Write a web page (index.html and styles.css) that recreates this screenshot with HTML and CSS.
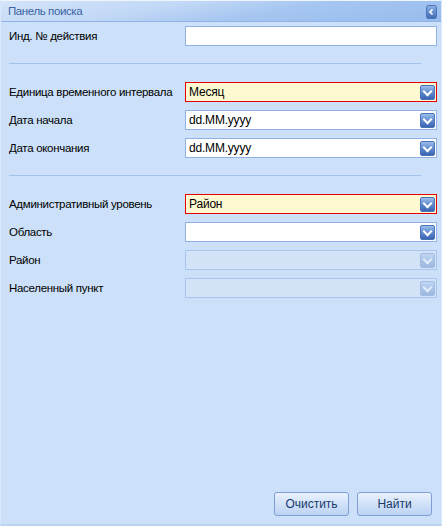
FILE: index.html
```html
<!DOCTYPE html>
<html lang="ru">
<head>
<meta charset="utf-8">
<title>Панель поиска</title>
<link rel="stylesheet" href="styles.css">
</head>
<body>
<div class="panel">
  <div class="header">
    <span class="title">Панель поиска</span>
    <span class="collapse">
      <svg width="11" height="14" viewBox="0 0 11 14">
        <defs>
          <linearGradient id="cg" x1="0" y1="0" x2="0" y2="1">
            <stop offset="0" stop-color="#8fb3e6"/>
            <stop offset="1" stop-color="#3d68b3"/>
          </linearGradient>
        </defs>
        <rect x="0.5" y="0.5" width="10" height="13" rx="2" fill="url(#cg)" stroke="#4a72b8"/>
        <path d="M6.5 4.5 L4 7 L6.5 9.5" fill="none" stroke="#fff" stroke-width="1.6"/>
      </svg>
    </span>
  </div>
  <div class="body">
    <div class="group">
      <div class="row"><label class="lbl">Инд. № действия</label><div class="field"></div></div>
    </div>
    <div class="sep"></div>
    <div class="group">
      <div class="row"><label class="lbl">Единица временного интервала</label><div class="field combo invalid"><span class="val">Месяц</span><span class="trigger"></span></div></div>
      <div class="row"><label class="lbl">Дата начала</label><div class="field combo"><span class="val">dd.MM.yyyy</span><span class="trigger"></span></div></div>
      <div class="row"><label class="lbl">Дата окончания</label><div class="field combo"><span class="val">dd.MM.yyyy</span><span class="trigger"></span></div></div>
    </div>
    <div class="sep"></div>
    <div class="group">
      <div class="row"><label class="lbl">Административный уровень</label><div class="field combo invalid"><span class="val">Район</span><span class="trigger"></span></div></div>
      <div class="row"><label class="lbl">Область</label><div class="field combo"><span class="val"></span><span class="trigger"></span></div></div>
      <div class="row"><label class="lbl">Район</label><div class="field combo disabled"><span class="val"></span><span class="trigger"></span></div></div>
      <div class="row"><label class="lbl">Населенный пункт</label><div class="field combo disabled"><span class="val"></span><span class="trigger"></span></div></div>
    </div>
  </div>
  <div class="footer">
    <button class="btn">Очистить</button>
    <button class="btn">Найти</button>
  </div>
</div>
</body>
</html>
```

FILE: styles.css
```css
* { box-sizing: border-box; }
html, body { margin: 0; padding: 0; }
body {
  font-family: "Liberation Sans", Arial, sans-serif;
  font-size: 12px;
  color: #000;
  background: #cde1f9;
}
.panel {
  width: 442px;
  height: 526px;
  display: flex;
  flex-direction: column;
  background: #cce0f9;
  border-left: 1px solid #d8e7fb;
  border-right: 1px solid #d8e7fb;
  border-bottom: 2px solid #bcd3f1;
}
.header {
  height: 22px;
  display: flex;
  align-items: center;
  justify-content: space-between;
  padding: 0 4px 0 7px;
  border-top: 1px solid #eef5fd;
  border-bottom: 1px solid #8fb3e4;
  background: linear-gradient(170deg, #d3e4f9 0%, #c2d8f6 35%, #a6c6f1 60%, #98bced 100%);
}
.title {
  color: #3a63a3;
  font-size: 11.5px;
  letter-spacing: -0.4px;
}
.collapse { display: flex; margin-top: 1px; }
.body {
  flex: 1;
  padding: 4px 4px 0 8px;
}
.group {
  display: flex;
  flex-direction: column;
  gap: 8px;
}
.row {
  display: flex;
  align-items: center;
  height: 20px;
}
.lbl {
  width: 176px;
  flex: none;
  white-space: nowrap;
  font-size: 11.5px;
  letter-spacing: -0.3px;
}
.field {
  flex: 1;
  height: 20px;
  background: #fff;
  border: 1px solid #8fb1e3;
  display: flex;
  align-items: center;
  padding-left: 3px;
}
.val { flex: 1; letter-spacing: -0.2px; }
.invalid {
  border-color: #e80000;
  background: #fff9d2;
}
.disabled {
  background: #d4e4f8;
  border-color: #a9c6ee;
}
.trigger {
  width: 15px;
  height: 15px;
  margin-right: 1px;
  border-radius: 2px;
  border: 1px solid #4a72b8;
  background: linear-gradient(#9bbdeb, #5b86cc 55%, #3b65b0);
  position: relative;
}
.trigger::after {
  content: "";
  position: absolute;
  left: 3px;
  top: 2px;
  width: 5px;
  height: 5px;
  border-right: 2px solid #fff;
  border-bottom: 2px solid #fff;
  transform: rotate(45deg);
}
.disabled .trigger { opacity: 0.35; }
.sep {
  height: 1px;
  background: #a3c3ec;
  margin: 17px 16px 18px 0;
}
.footer {
  display: flex;
  justify-content: flex-end;
  gap: 8px;
  padding: 0 9px 8px 0;
}
.btn {
  width: 75px;
  height: 24px;
  border: 1px solid #7f9fd6;
  border-radius: 3px;
  background: linear-gradient(#eaf2fd, #d3e3f9 45%, #bcd3f4);
  color: #1a3a6b;
  font-family: "Liberation Sans", Arial, sans-serif;
  font-size: 12px;
  padding: 0;
}
```
